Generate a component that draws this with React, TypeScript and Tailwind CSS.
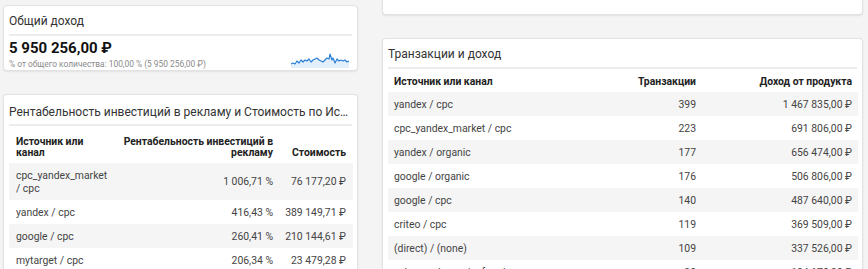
import React from 'react';

type Row = { name: string; a: string; b: string };

const roiRows: Row[] = [
  { name: 'cpc_yandex_market / cpc', a: '1 006,71 %', b: '76 177,20 ₽' },
  { name: 'yandex / cpc', a: '416,43 %', b: '389 149,71 ₽' },
  { name: 'google / cpc', a: '260,41 %', b: '210 144,61 ₽' },
  { name: 'mytarget / cpc', a: '206,34 %', b: '23 479,28 ₽' },
];

const txRows: Row[] = [
  { name: 'yandex / cpc', a: '399', b: '1 467 835,00 ₽' },
  { name: 'cpc_yandex_market / cpc', a: '223', b: '691 806,00 ₽' },
  { name: 'yandex / organic', a: '177', b: '656 474,00 ₽' },
  { name: 'google / organic', a: '176', b: '506 806,00 ₽' },
  { name: 'google / cpc', a: '140', b: '487 640,00 ₽' },
  { name: 'criteo / cpc', a: '119', b: '369 509,00 ₽' },
  { name: '(direct) / (none)', a: '109', b: '337 526,00 ₽' },
  { name: 'yabs.yandex.ru / referral', a: '98', b: '184 170,00 ₽' },
];

const Sparkline: React.FC = () => {
  const pts = [
    [0, 12], [2, 11], [4, 12], [6, 9], [8, 11], [10, 8], [12, 10], [14, 8], [16, 9], [18, 7],
    [20, 10], [22, 8], [24, 7], [26, 6], [28, 8], [30, 9], [32, 10], [34, 8], [36, 6], [38, 7],
    [39, 2], [41, 8], [42, 6], [44, 11], [46, 7], [48, 9], [50, 8], [52, 9], [54, 8], [56, 10], [58, 9],
  ];
  const line = pts.map((p) => p.join(',')).join(' ');
  const area = `0,16 ${line} 58,16`;
  return (
    <svg width="60" height="16" viewBox="0 0 60 16" className="block">
      <polygon points={area} fill="#e3effb" />
      <polyline points={line} fill="none" stroke="#2a7fd4" strokeWidth="1.2" strokeLinejoin="round" />
    </svg>
  );
};

const Card: React.FC<{ className?: string; children: React.ReactNode }> = ({ className, children }) => (
  <div className={`bg-white border border-[#e2e2e2] rounded-[4px] shadow-[0_1px_2px_rgba(0,0,0,0.08)] shrink-0 ${className ?? ''}`}>
    {children}
  </div>
);

export default function App() {
  return (
    <div
      className="w-[868px] h-[269px] overflow-hidden bg-[#f4f4f4] flex items-start gap-[24px] pl-[3px] text-[#333]"
      style={{ fontFamily: 'Roboto, "Liberation Sans", Arial, sans-serif' }}
    >
      {/* left column */}
      <div className="w-[355px] flex flex-col gap-[23px] pt-[5px] shrink-0">
        <Card className="h-[66px] px-[5px]">
          <div className="pt-[8px] pb-[5px] text-[12px] leading-[15px] text-[#333]">Общий доход</div>
          <div className="h-[2px] bg-[#ececec]" />
          <div className="flex items-end justify-between">
            <div>
              <div className="pt-[2px] text-[15px] leading-[20px] font-bold text-[#111]">5 950 256,00 ₽</div>
              <div className="pt-[1px] text-[8.4px] leading-[10px] text-[#8a8a8a]">
                % от общего количества: 100,00 % (5 950 256,00 ₽)
              </div>
            </div>
            <div className="mr-[1px] mb-[1px]">
              <Sparkline />
            </div>
          </div>
        </Card>

        <Card className="px-[5px] rounded-b-none border-b-0">
          <div className="pt-[9px] pb-[4px] text-[12px] leading-[16px] text-[#333] truncate">
            Рентабельность инвестиций в рекламу и Стоимость по Источник или канал
          </div>
          <div className="h-[2px] bg-[#ececec]" />
          <table className="w-[344px] table-fixed border-collapse">
            <colgroup>
              <col className="w-[110px]" />
              <col className="w-[161px]" />
              <col className="w-[73px]" />
            </colgroup>
            <thead>
              <tr className="text-[10.4px] leading-[11px] font-bold text-[#222]">
                <th className="text-left align-bottom pl-[7px] pr-[20px] pt-[10px] pb-[5px]">Источник или канал</th>
                <th className="text-right align-bottom pr-[7px] pt-[10px] pb-[5px]">
                  Рентабельность инвестиций в рекламу
                </th>
                <th className="text-right align-bottom pr-[7px] pt-[10px] pb-[5px]">Стоимость</th>
              </tr>
            </thead>
            <tbody>
              {roiRows.map((r, i) => (
                <tr key={r.name} className={`text-[10.4px] leading-[13px] ${i % 2 === 0 ? 'bg-[#f5f5f5]' : 'bg-white'}`}>
                  <td className="pl-[7px] pr-[12px] py-[5.5px] text-[#444]">{r.name}</td>
                  <td className="text-right pr-[7px] py-[5.5px] text-[#444]">{r.a}</td>
                  <td className="text-right pr-[7px] py-[5.5px] text-[#444] whitespace-nowrap">{r.b}</td>
                </tr>
              ))}
            </tbody>
          </table>
        </Card>
      </div>

      {/* right column */}
      <div className="w-[481px] flex flex-col gap-[23px] shrink-0">
        <div className="h-[15px] shrink-0 bg-white border border-t-0 border-[#e2e2e2] rounded-b-[4px] shadow-[0_1px_2px_rgba(0,0,0,0.08)]" />
        <Card className="px-[5px] rounded-b-none border-b-0">
          <div className="pt-[7px] pb-[5px] text-[12px] leading-[16px] text-[#333]">Транзакции и доход</div>
          <div className="h-[2px] bg-[#ececec]" />
          <table className="w-[470px] table-fixed border-collapse">
            <colgroup>
              <col className="w-[240px]" />
              <col className="w-[74px]" />
              <col className="w-[156px]" />
            </colgroup>
            <thead>
              <tr className="text-[10.4px] leading-[12px] font-bold text-[#222]">
                <th className="text-left pl-[6px] pt-[7px] pb-[4px]">Источник или канал</th>
                <th className="text-right pr-[6px] pt-[7px] pb-[4px]">Транзакции</th>
                <th className="text-right pr-[6px] pt-[7px] pb-[4px]">Доход от продукта</th>
              </tr>
            </thead>
            <tbody>
              {txRows.map((r, i) => (
                <tr key={r.name} className={`text-[10.4px] leading-[13px] ${i % 2 === 0 ? 'bg-[#f5f5f5]' : 'bg-white'}`}>
                  <td className="pl-[6px] py-[5.5px] text-[#444]">{r.name}</td>
                  <td className="text-right pr-[6px] py-[5.5px] text-[#444]">{r.a}</td>
                  <td className="text-right pr-[6px] py-[5.5px] text-[#444]">{r.b}</td>
                </tr>
              ))}
            </tbody>
          </table>
        </Card>
      </div>
    </div>
  );
}
